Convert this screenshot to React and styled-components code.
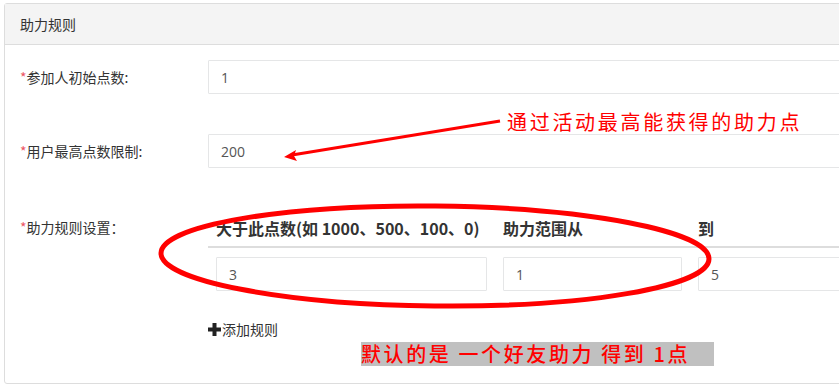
import React from 'react'
import styled, { createGlobalStyle } from 'styled-components'

const GlobalStyle = createGlobalStyle`
  html, body {
    margin: 0;
    padding: 0;
    overflow: hidden;
    background: #fff;
  }
  body {
    font-family: "Noto Sans CJK SC", "Open Sans", sans-serif;
    color: #333;
  }
`

const Page = styled.div`
  position: relative;
  width: 839px;
  height: 392px;
  padding: 3px 0 0 4px;
  box-sizing: border-box;
  overflow: hidden;
`

const Panel = styled.div`
  width: 900px;
  height: 381px;
  box-sizing: border-box;
  border: 1px solid #ddd;
  border-radius: 3px;
  background: #fff;
`

const PanelHeader = styled.div`
  height: 40px;
  display: flex;
  align-items: center;
  padding: 0 15px;
  background: #f4f4f4;
  border-bottom: 1px solid #ddd;
  font-size: 14px;
  color: #333;
`

const PanelBody = styled.div`
  padding: 15px 15px;
  display: flex;
  flex-direction: column;
  gap: 40px;
`

const FormRow = styled.div`
  display: flex;
  align-items: flex-start;
`

const Label = styled.label`
  width: 188px;
  flex: none;
  font-size: 14px;
  line-height: ${({ tall }) => (tall ? '38px' : '34px')};
  color: #333;
  &::before {
    content: '*';
    color: #ed5565;
  }
`

const Input = styled.input`
  box-sizing: border-box;
  height: 34px;
  width: ${({ w }) => w || '100%'};
  padding: 6px 12px;
  border: 1px solid #e5e6e7;
  border-radius: 1px;
  font-family: "Open Sans", "Noto Sans CJK SC", sans-serif;
  font-size: 14px;
  color: #555;
  background: #fff;
  outline: none;
`

const Field = styled.div`
  width: 640px;
`

const RuleTable = styled.table`
  border-collapse: collapse;
  width: 660px;
`

const HeadCell = styled.th`
  text-align: left;
  padding: 10px 8px 8px;
  line-height: 20px;
  font-size: 16px;
  font-weight: 700;
  color: #333;
  border-bottom: 2px solid #ddd;
  white-space: nowrap;
  width: ${({ w }) => w};
`

const Cell = styled.td`
  padding: 9px 8px 8px;
`

const Section = styled.div`
  display: flex;
  flex-direction: column;
`

const AddRule = styled.div`
  margin: 20px 0 0 188px;
  display: flex;
  align-items: center;
  font-size: 14px;
  line-height: 20px;
  color: #333;
  gap: 1px;
`

const Note = styled.div`
  position: absolute;
  left: ${({ x }) => x}px;
  top: ${({ y }) => y}px;
  color: #ff0000;
  font-size: 20px;
  line-height: 24px;
  letter-spacing: ${({ ls }) => ls}px;
  font-weight: ${({ weight }) => weight || 400};
  background: ${({ bg }) => bg || 'transparent'};
  padding-right: ${({ pr }) => pr || 0}px;
  white-space: pre;
`

const Overlay = styled.svg`
  position: absolute;
  left: 0;
  top: 0;
  pointer-events: none;
`

function PlusIcon () {
  return (
    <svg width='13' height='13' viewBox='0 0 13 13'>
      <rect x='4.5' y='0' width='4' height='13' fill='#222' />
      <rect x='0' y='4.5' width='13' height='4' fill='#222' />
    </svg>
  )
}

export default function App () {
  return (
    <>
      <GlobalStyle />
      <Page>
        <Panel>
          <PanelHeader>助力规则</PanelHeader>
          <PanelBody>
            <FormRow>
              <Label>参加人初始点数:</Label>
              <Field><Input defaultValue='1' /></Field>
            </FormRow>
            <FormRow>
              <Label>用户最高点数限制:</Label>
              <Field><Input defaultValue='200' /></Field>
            </FormRow>
            <Section>
              <FormRow>
                <Label tall>助力规则设置：</Label>
                <RuleTable>
                  <thead>
                    <tr>
                      <HeadCell w='271px'>大于此点数(如 1000、500、100、0)</HeadCell>
                      <HeadCell w='179px'>助力范围从</HeadCell>
                      <HeadCell>到</HeadCell>
                    </tr>
                  </thead>
                  <tbody>
                    <tr>
                      <Cell><Input defaultValue='3' /></Cell>
                      <Cell><Input defaultValue='1' /></Cell>
                      <Cell><Input defaultValue='5' /></Cell>
                    </tr>
                  </tbody>
                </RuleTable>
              </FormRow>
              <AddRule><PlusIcon />添加规则</AddRule>
            </Section>
          </PanelBody>
        </Panel>

        {/* annotations drawn over the screenshot */}
        <Overlay width='839' height='392' viewBox='0 0 839 392'>
          <ellipse cx='435' cy='256' rx='274' ry='50' fill='none' stroke='#ff0000' strokeWidth='5' transform='rotate(0.6 435 256)' />
          <line x1='500' y1='121' x2='292' y2='155' stroke='#ff0000' strokeWidth='3' />
          <polygon points='284,157 296,150 294,156 297,161' fill='#ff0000' />
        </Overlay>
        <Note x={507} y={110} ls={2.7}>通过活动最高能获得的助力点</Note>
        <Note x={361} y={342} ls={2.6} weight={500} bg='#c0c0c0' pr={24}>默认的是 一个好友助力 得到 1点</Note>
      </Page>
    </>
  )
}
